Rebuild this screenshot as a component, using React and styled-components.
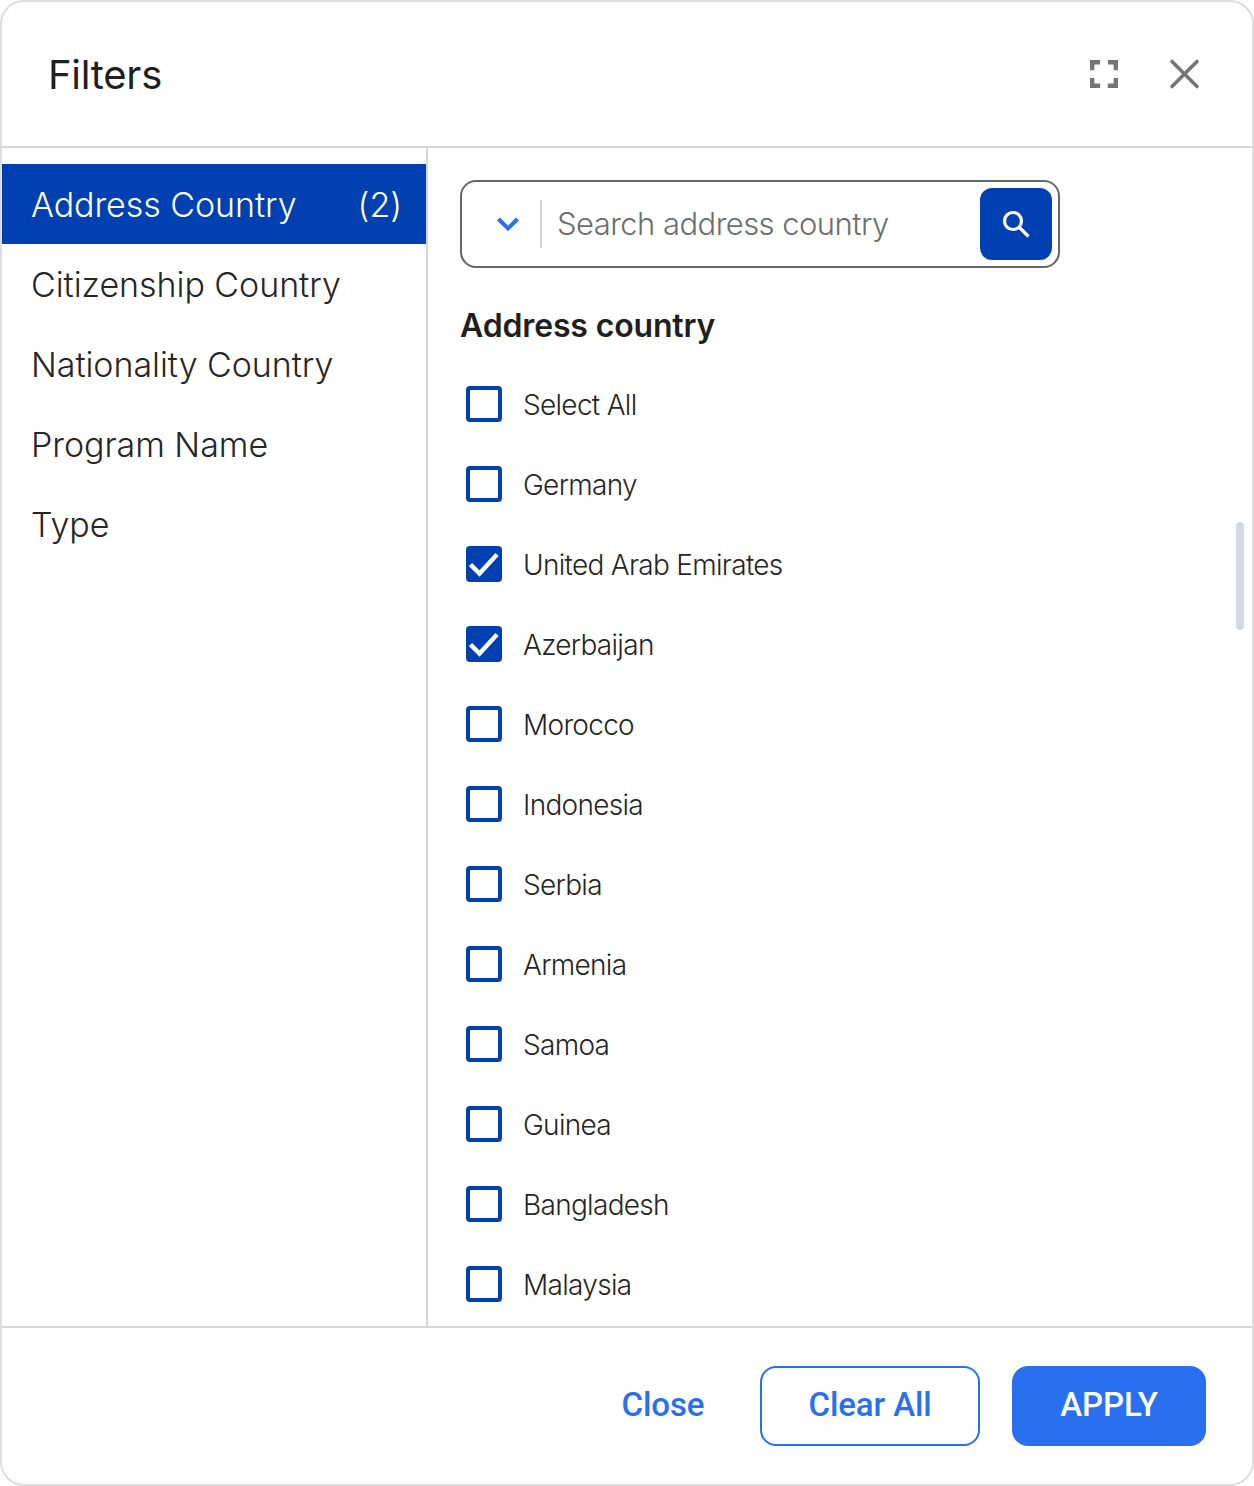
import React from "react";
import styled, { createGlobalStyle } from "styled-components";

const Global = createGlobalStyle`
  html, body { margin: 0; padding: 0; background: #fff; }
  * { box-sizing: border-box; }
  body { font-family: Inter, "Liberation Sans", sans-serif; }
`;

const Modal = styled.div`
  width: 1254px; height: 1486px; background: #fff;
  border: 2px solid #dedede; border-radius: 24px;
  display: flex; flex-direction: column; overflow: hidden;
`;
const Header = styled.header`
  height: 146px; flex: none; border-bottom: 2px solid #d6d6d6;
  display: flex; align-items: center; justify-content: space-between;
  padding: 0 52px 0 46px;
`;
const Title = styled.h1`
  margin: 0; font-size: 40px; font-weight: 400; color: #1f1f1f; letter-spacing: -0.25px;
`;
const HeaderActions = styled.div`
  display: flex; align-items: center; gap: 48px;
`;
const IconButton = styled.button`
  width: 32px; height: 32px; padding: 0; border: 0; background: none; display: flex;
`;
const Body = styled.div`
  flex: 1; min-height: 0; display: flex;
`;
const Sidebar = styled.nav`
  width: 426px; flex: none; border-right: 2px solid #d6d6d6; padding-top: 16px;
`;
const SideItem = styled.div`
  height: 80px; padding: 0 24px 0 29px; display: flex; align-items: center; justify-content: space-between;
  font-size: 34px; font-weight: 350; letter-spacing: -0.05px;
  background: ${p => (p.$active ? "#0040b0" : "transparent")};
  color: ${p => (p.$active ? "#fff" : "#262626")};
`;
const Main = styled.main`
  flex: 1; min-width: 0; padding: 32px 0 0 32px; position: relative; overflow: hidden;
`;
const SearchBox = styled.div`
  width: 600px; height: 88px; border: 2px solid #666; border-radius: 16px;
  display: flex; align-items: center; padding: 0 6px 0 0;
`;
const Chevron = styled.div`
  width: 80px; flex: none; display: flex; justify-content: center; height: 48px; align-items: center;
  padding-left: 14px; border-right: 2px solid #d6d6d6;
`;
const Placeholder = styled.div`
  flex: 1; padding: 0 0 2px 15px; font-size: 31px; font-weight: 350; color: #6e6e6e; letter-spacing: -0.55px;
`;
const SearchButton = styled.button`
  width: 72px; height: 72px; border: 0; border-radius: 12px; background: #0040b0; padding: 0;
  display: flex; align-items: center; justify-content: center;
`;
const Heading = styled.h2`
  margin: 38px 0 0; height: 40px; line-height: 40px; font-size: 32px; font-weight: 600; color: #1f1f1f; letter-spacing: -0.15px;
`;
const List = styled.div`
  margin-top: 18px; display: flex; flex-direction: column;
`;
const Row = styled.label`
  height: 80px; flex: none; display: flex; align-items: center; padding-left: 6px; gap: 21px;
  font-size: 28px; font-weight: 350; color: #262626; letter-spacing: -0.7px;
`;
const RowText = styled.span`
  padding-top: 2px;
`;
const Box = styled.span`
  width: 36px; height: 36px; flex: none; border-radius: 4px; border: 4px solid #0040b0;
  background: ${p => (p.$checked ? "#0040b0" : "#fff")};
  display: flex; align-items: center; justify-content: center;
`;
const ScrollThumb = styled.div`
  position: absolute; right: 8px; top: 374px; width: 8px; height: 108px; border-radius: 4px; background: #d3d8e2;
`;
const Footer = styled.footer`
  height: 158px; flex: none; border-top: 2px solid #d6d6d6;
  display: flex; align-items: center; justify-content: flex-end; padding: 0 46px 0 0; gap: 32px;
  font-family: Roboto, "Liberation Sans", sans-serif;
`;
const FooterButton = styled.button`
  height: 80px; border-radius: 16px; font-family: inherit; font-size: 33px; font-weight: 500; letter-spacing: -0.1px;
  width: ${p => p.$width}px;
  border: ${p => (p.$variant === "text" ? "0" : "2px solid #2970f0")};
  background: ${p => (p.$variant === "solid" ? "#2970f0" : "transparent")};
  color: ${p => (p.$variant === "solid" ? "#fff" : "#2970f0")};
  padding: 0 0 3px;
`;

const countries = [
  ["Select All"], ["Germany"], ["United Arab Emirates", true], ["Azerbaijan", true], ["Morocco"],
  ["Indonesia"], ["Serbia"], ["Armenia"], ["Samoa"], ["Guinea"], ["Bangladesh"], ["Malaysia"],
];
const sideItems = ["Citizenship Country", "Nationality Country", "Program Name", "Type"];

export default function App() {
  return (
    <>
      <Global />
      <Modal>
        <Header>
          <Title>Filters</Title>
          <HeaderActions>
            <IconButton aria-label="Expand">
              <svg width="32" height="32" viewBox="0 0 32 32" fill="none" stroke="#757575" strokeWidth="4.4">
                <path d="M12 4.2H4.2v8M20 4.2h7.8v8M4.2 20v7.8h8M27.8 20v7.8h-8" />
              </svg>
            </IconButton>
            <IconButton aria-label="Close">
              <svg width="32" height="32" viewBox="0 0 32 32" fill="none" stroke="#757575" strokeWidth="3.6" strokeLinecap="round">
                <path d="M4 3.5l25 25M29 3.5L4 28.5" />
              </svg>
            </IconButton>
          </HeaderActions>
        </Header>
        <Body>
          <Sidebar>
            <SideItem $active>
              <span>Address Country</span>
              <span>(2)</span>
            </SideItem>
            {sideItems.map(s => (
              <SideItem key={s}>{s}</SideItem>
            ))}
          </Sidebar>
          <Main>
            <SearchBox>
              <Chevron>
                <svg width="24" height="16" viewBox="0 0 24 16" fill="none" stroke="#2970f0" strokeWidth="4">
                  <path d="M2.5 3L12 12.5L21.5 3" />
                </svg>
              </Chevron>
              <Placeholder>Search address country</Placeholder>
              <SearchButton aria-label="Search">
                <svg width="28" height="28" viewBox="0 0 28 28" fill="none" stroke="#fff" strokeWidth="3.2">
                  <circle cx="11" cy="11" r="8.5" />
                  <path d="M17 17l9.5 9.5" />
                </svg>
              </SearchButton>
            </SearchBox>
            <Heading>Address country</Heading>
            <List>
              {countries.map(([name, checked]) => (
                <Row key={name}>
                  <Box $checked={checked}>
                    {checked && (
                      <svg width="30" height="26" viewBox="0 0 30 26" fill="none" stroke="#fff" strokeWidth="4.5" style={{ flex: "none" }}>
                        <path d="M1.5 13.5L10.5 22.5L28 3.5" />
                      </svg>
                    )}
                  </Box>
                  <RowText>{name}</RowText>
                </Row>
              ))}
            </List>
            <ScrollThumb />
          </Main>
        </Body>
        <Footer>
          <FooterButton $variant="text" $width={130}>Close</FooterButton>
          <FooterButton $variant="outline" $width={220}>Clear All</FooterButton>
          <FooterButton $variant="solid" $width={194}>APPLY</FooterButton>
        </Footer>
      </Modal>
    </>
  );
}
